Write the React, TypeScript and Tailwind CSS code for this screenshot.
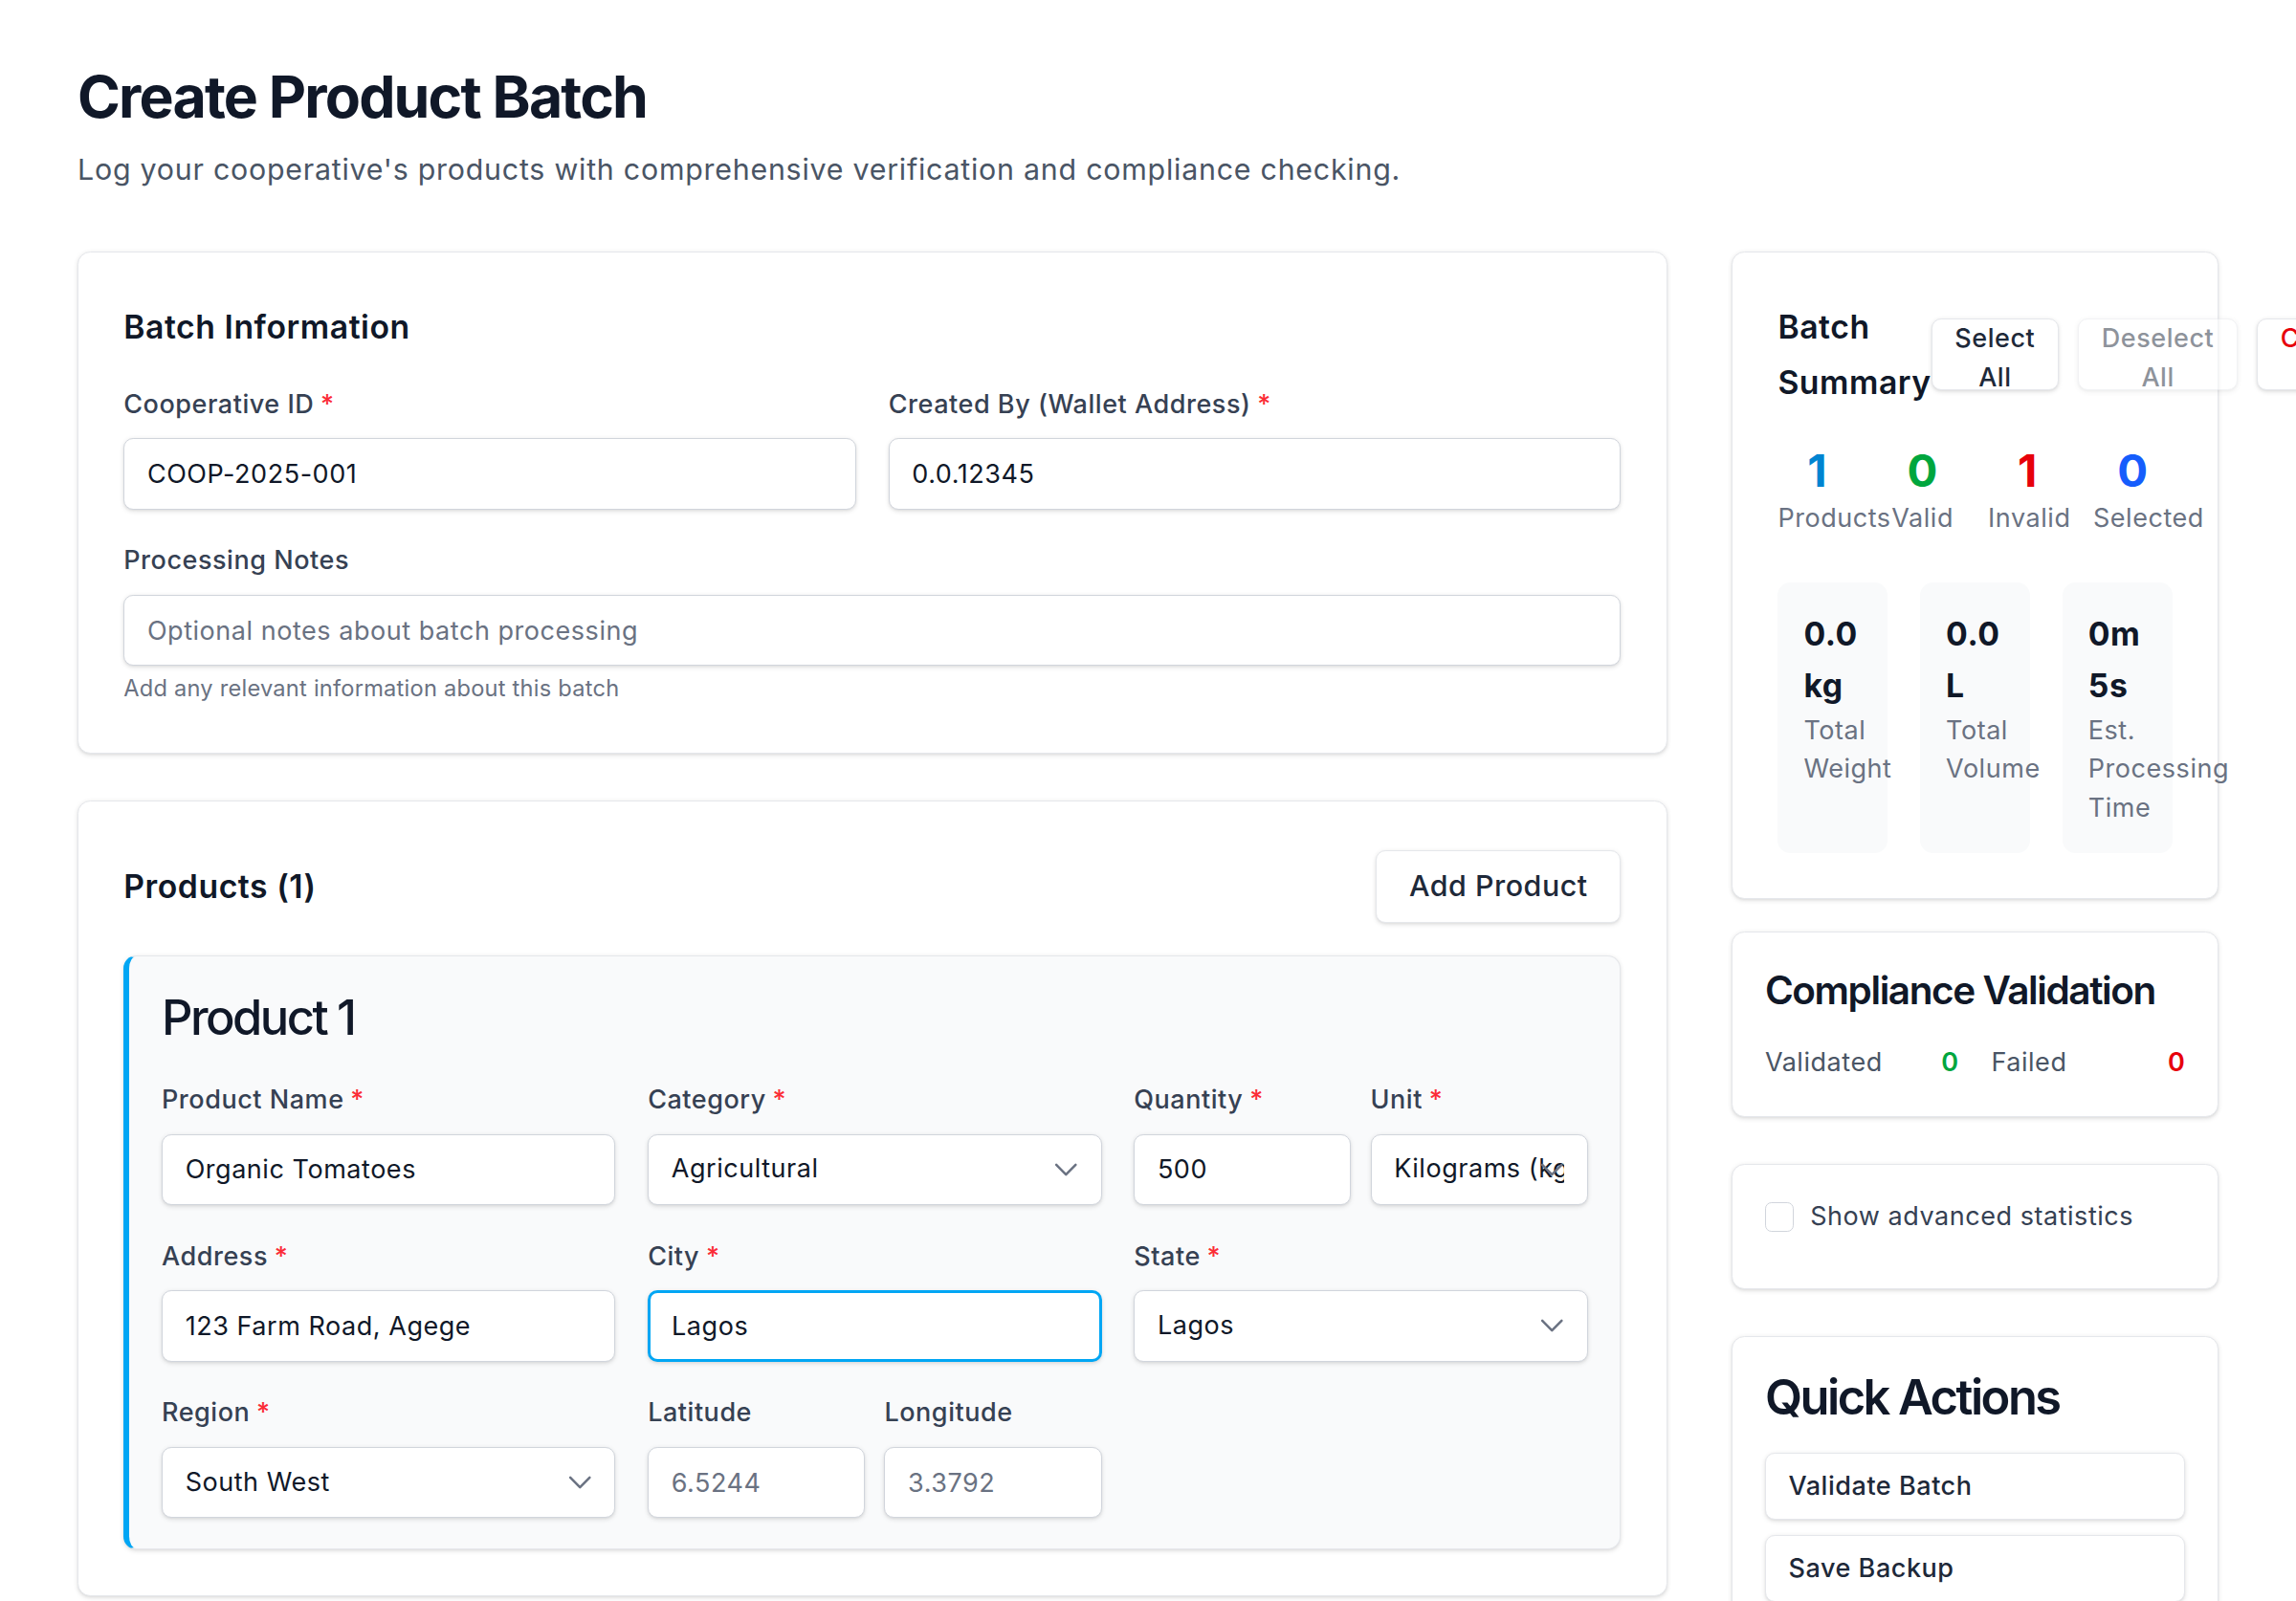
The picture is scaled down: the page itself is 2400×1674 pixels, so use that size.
import React from "react";
import { ChevronDown } from "lucide-react";

const inputBase =
  "h-11 w-full rounded-md bg-white text-base text-gray-900 shadow-sm outline-none placeholder:text-gray-500";
const inputCls = `${inputBase} border border-gray-300 px-3.5`;

function Field({
  label,
  req,
  children,
}: {
  label: string;
  req?: boolean;
  children: React.ReactNode;
}) {
  return (
    <div className="flex min-w-0 flex-col gap-[9px]">
      <label className="block text-base leading-6 font-medium text-gray-700">
        {label}
        {req && <span className="ml-1 text-red-500">*</span>}
      </label>
      {children}
    </div>
  );
}

function TextInput({
  value,
  placeholder,
  focused,
}: {
  value?: string;
  placeholder?: string;
  focused?: boolean;
}) {
  return (
    <input
      className={
        focused
          ? `${inputBase} border-2 border-sky-500 px-[13px]`
          : inputCls
      }
      defaultValue={value}
      placeholder={placeholder}
    />
  );
}

function SelectBox({ value }: { value: string }) {
  return (
    <div className="relative w-full">
      <select className={`${inputCls} appearance-none`} defaultValue={value}>
        <option>{value}</option>
      </select>
      <ChevronDown
        className="pointer-events-none absolute top-1/2 right-2.5 h-6 w-6 -translate-y-1/2 text-gray-500"
        strokeWidth={1.5}
      />
    </div>
  );
}

const card = "rounded-lg border border-gray-200 bg-white shadow-sm";
const btn =
  "rounded-md border border-gray-200 bg-white font-medium text-gray-800 shadow-sm";

export default function App() {
  const stats = [
    { n: "1", label: "Products", color: "text-sky-600" },
    { n: "0", label: "Valid", color: "text-green-600" },
    { n: "1", label: "Invalid", color: "text-red-600" },
    { n: "0", label: "Selected", color: "text-blue-600" },
  ];
  const metrics = [
    { v: "0.0 kg", l: "Total Weight" },
    { v: "0.0 L", l: "Total Volume" },
    { v: "0m 5s", l: "Est. Processing Time" },
  ];
  return (
    <div className="min-h-screen w-full overflow-hidden bg-white">
      <div className="[zoom:1.6875] [font-family:Inter,ui-sans-serif,system-ui,sans-serif] tracking-[0.02em] px-12 pt-10 pb-12">
        <h1 className="text-4xl leading-10 font-bold tracking-[-0.03em] text-gray-900">
          Create Product Batch
        </h1>
        <p className="mt-[11px] text-lg tracking-[0.025em] text-gray-600">
          Log your cooperative's products with comprehensive verification and
          compliance checking.
        </p>

        <div className="mt-[37px] grid grid-cols-4 items-start gap-10">
          {/* Left column */}
          <div className="col-span-3 flex flex-col gap-[29px]">
            <section className={`${card} px-7 pt-8 pb-[30px]`}>
              <h2 className="text-xl font-semibold text-gray-900">
                Batch Information
              </h2>
              <div className="mt-[22px] grid grid-cols-2 gap-5">
                <Field label="Cooperative ID" req>
                  <TextInput value="COOP-2025-001" />
                </Field>
                <Field label="Created By (Wallet Address)" req>
                  <TextInput value="0.0.12345" />
                </Field>
              </div>
              <div className="mt-5">
                <Field label="Processing Notes">
                  <TextInput placeholder="Optional notes about batch processing" />
                </Field>
                <p className="mt-1 text-sm tracking-[0.01em] text-gray-500">
                  Add any relevant information about this batch
                </p>
              </div>
            </section>

            <section className={`${card} px-7 pt-[30px] pb-[28px]`}>
              <div className="flex items-center justify-between">
                <h2 className="text-xl font-semibold text-gray-900">
                  Products (1)
                </h2>
                <button className={`${btn} px-5 py-2 text-lg`}>
                  Add Product
                </button>
              </div>

              <div className="mt-5 rounded-lg border border-gray-200 border-l-4 border-l-sky-500 bg-gray-50 px-5 pt-5 pb-[19px] shadow-sm">
                <h3 className="text-3xl font-medium tracking-[-0.05em] text-gray-900">
                  Product 1
                </h3>
                <div className="mt-[21px] grid grid-cols-3 gap-5">
                  <Field label="Product Name" req>
                    <TextInput value="Organic Tomatoes" />
                  </Field>
                  <Field label="Category" req>
                    <SelectBox value="Agricultural" />
                  </Field>
                  <div className="grid grid-cols-2 gap-3">
                    <Field label="Quantity" req>
                      <TextInput value="500" />
                    </Field>
                    <Field label="Unit" req>
                      <SelectBox value="Kilograms (kg)" />
                    </Field>
                  </div>

                  <Field label="Address" req>
                    <TextInput value="123 Farm Road, Agege" />
                  </Field>
                  <Field label="City" req>
                    <TextInput value="Lagos" focused />
                  </Field>
                  <Field label="State" req>
                    <SelectBox value="Lagos" />
                  </Field>

                  <Field label="Region" req>
                    <SelectBox value="South West" />
                  </Field>
                  <div className="grid grid-cols-2 gap-3">
                    <Field label="Latitude">
                      <TextInput placeholder="6.5244" />
                    </Field>
                    <Field label="Longitude">
                      <TextInput placeholder="3.3792" />
                    </Field>
                  </div>
                </div>
              </div>
            </section>
          </div>

          {/* Right column */}
          <div className="flex flex-col">
            <section className={`${card} px-7 pt-[29px] pb-7`}>
              <div className="flex items-center justify-between">
                <h2 className="text-xl leading-[34px] font-semibold text-gray-900">
                  Batch Summary
                </h2>
                <div className="flex gap-3">
                  <button className={`${btn} h-11 px-3.5 text-base leading-6`}>
                    Select All
                  </button>
                  <button
                    className={`${btn} h-11 px-3.5 text-base leading-6 opacity-50`}
                    disabled
                  >
                    Deselect All
                  </button>
                  <button className="h-11 rounded-md border border-gray-200 bg-white px-3.5 text-base leading-6 font-medium text-red-600 shadow-sm">
                    Clear All
                  </button>
                </div>
              </div>

              <div className="mt-[20px] grid grid-cols-4 gap-4 text-center">
                {stats.map((s, i) => (
                  <div key={i} className="min-w-0">
                    <div className={`text-[28px] leading-9 font-bold ${s.color}`}>
                      {s.n}
                    </div>
                    <div className="text-base text-gray-500">{s.label}</div>
                  </div>
                ))}
              </div>

              <div className="mt-[27px] grid grid-cols-3 gap-5">
                {metrics.map((m, i) => (
                  <div key={i} className="min-w-0 rounded-lg bg-gray-50 p-4">
                    <div className="text-xl leading-8 font-bold text-gray-900">
                      {m.v}
                    </div>
                    <div className="text-base text-gray-500">{m.l}</div>
                  </div>
                ))}
              </div>
            </section>

            <section className={`${card} mt-5 px-5 pt-5 pb-[21px]`}>
              <h2 className="text-2xl font-semibold tracking-[-0.035em] text-gray-900">
                Compliance Validation
              </h2>
              <div className="mt-[17px] grid grid-cols-2 gap-5 text-base">
                <div className="flex justify-between">
                  <span className="text-gray-600">Validated</span>
                  <span className="font-semibold text-green-600">0</span>
                </div>
                <div className="flex justify-between">
                  <span className="text-gray-600">Failed</span>
                  <span className="font-semibold text-red-600">0</span>
                </div>
              </div>
            </section>

            <section className={`${card} mt-[29px] px-5 pt-5 pb-[32px]`}>
              <label className="flex items-center gap-2.5">
                <span className="h-[18px] w-[18px] rounded border border-gray-300 bg-white" />
                <span className="text-base text-gray-700">
                  Show advanced statistics
                </span>
              </label>
            </section>

            <section className={`${card} mt-[29px] p-5`}>
              <h2 className="text-3xl font-semibold tracking-[-0.05em] text-gray-900">
                Quick Actions
              </h2>
              <div className="mt-4 flex flex-col gap-2.5">
                {["Validate Batch", "Save Backup", "Load Backup", "Export CSV"].map(
                  (t) => (
                    <button
                      key={t}
                      className={`${btn} w-full px-3.5 py-2 text-left text-base`}
                    >
                      {t}
                    </button>
                  )
                )}
              </div>
            </section>
          </div>
        </div>
      </div>
    </div>
  );
}
